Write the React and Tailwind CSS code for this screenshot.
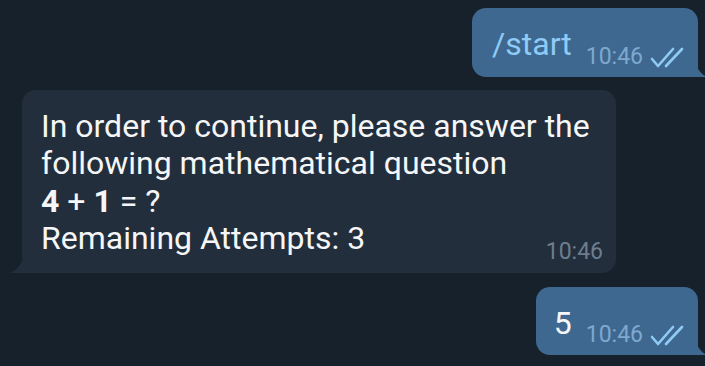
import React from 'react'

const font = { fontFamily: 'Roboto, "Noto Sans", sans-serif' }

const Checks = () => (
  <svg width="34" height="22" viewBox="0 0 34 22" fill="none" stroke="#8fcbf5" strokeWidth="2.6" strokeLinecap="round" strokeLinejoin="round">
    <path d="M2 13 L8 20 L23 3" />
    <path d="M16 20 L32 3" />
  </svg>
)

const TailRight = ({ color }) => (
  <svg className="absolute bottom-0 -right-[9px]" width="12" height="22" viewBox="0 0 12 22">
    <path d="M0 0 C0 11 4 18 12 22 L0 22 Z" fill={color} />
  </svg>
)

const TailLeft = ({ color }) => (
  <svg className="absolute bottom-0 -left-[12px]" width="14" height="24" viewBox="0 0 14 24">
    <path d="M14 0 C14 12 9 20 0 24 L14 24 Z" fill={color} />
  </svg>
)

const Outgoing = ({ children, textClass, pl }) => (
  <div className="flex justify-end pr-[7px]">
    <div className={`relative flex items-end rounded-[14px] rounded-br-none bg-[#3e6890] ${pl} pr-[14px] pt-[18px] pb-[13px]`}>
      <span className={`text-[32px] leading-[37.5px] ${textClass}`}>{children}</span>
      <span className="ml-[14px] -mb-[5px] flex items-center gap-[7px] text-[23px] leading-[24px] text-[#7fa8cf]">
        10:46
        <Checks />
      </span>
      <TailRight color="#3e6890" />
    </div>
  </div>
)

export default function App() {
  return (
    <div className="h-[366px] w-[705px] overflow-hidden bg-[#17212b] pt-[8px] flex flex-col" style={font}>
      <Outgoing textClass="text-[#8ecbf7]" pl="pl-[20px]">/start</Outgoing>
      <div className="mt-[13px] flex pl-[22px]">
        <div className="relative w-[594px] rounded-[14px] rounded-bl-none bg-[#232e3c] pl-[19px] pr-[13px] pt-[18px] pb-[15px] text-[#f5f6f7]">
          <div className="text-[32px] leading-[37.5px]">
            <p>In order to continue, please answer the</p>
            <p>following mathematical question</p>
            <p><b className="font-bold">4</b> + <b className="font-bold">1</b> = ?</p>
            <div className="flex items-end justify-between">
              <p>Remaining Attempts: 3</p>
              <span className="-mb-[6px] text-[23px] leading-[24px] text-[#6d7d8e]">10:46</span>
            </div>
          </div>
          <TailLeft color="#232e3c" />
        </div>
      </div>
      <div className="mt-[14px]">
        <Outgoing textClass="text-[#f5f6f7]" pl="pl-[18px]">5</Outgoing>
      </div>
    </div>
  )
}
